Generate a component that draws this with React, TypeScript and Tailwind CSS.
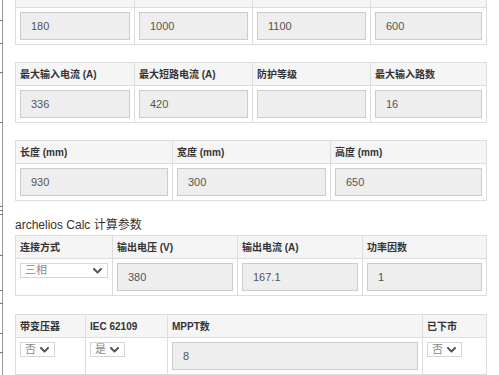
import React from "react";

const FONT = { fontFamily: '"Liberation Sans", Arial, "Noto Sans CJK SC", sans-serif' };

function Chevron() {
  return (
    <svg width="9" height="6" viewBox="0 0 9 6" className="shrink-0">
      <path d="M1 1 L4.5 4.5 L8 1" fill="none" stroke="#555" strokeWidth="2" strokeLinecap="round" strokeLinejoin="round" />
    </svg>
  );
}

function Head({ children, first, raise }: { children?: React.ReactNode; first?: boolean; raise?: boolean }) {
  return (
    <div
      className={`h-[23px] flex items-center px-1 bg-[#f5f5f5] border-b border-[#dddddd] text-[10px] font-bold text-[#333] whitespace-nowrap overflow-hidden ${first ? "" : "border-l"}`}
    >
      <span className={raise ? "relative -top-[3px]" : ""}>{children}</span>
    </div>
  );
}

function Cell({ children, first }: { children?: React.ReactNode; first?: boolean }) {
  return <div className={`p-1 bg-white border-[#dddddd] ${first ? "" : "border-l"}`}>{children}</div>;
}

function Input({ value }: { value: string }) {
  return (
    <div className="h-[28px] w-full bg-[#eeeeee] border border-[#cccccc] flex items-center pl-[10px] text-[11px] text-[#555]">
      {value}
    </div>
  );
}

function Select({ value, wide }: { value: string; wide?: boolean }) {
  return (
    <div
      className={`h-[15px] bg-white border border-[#d6d6d6] flex items-center justify-between pl-[4px] pr-[5px] text-[11px] text-[#8a8a8a] ${wide ? "w-full" : "w-[35px]"}`}
    >
      <span className="leading-none">{value}</span>
      <Chevron />
    </div>
  );
}

type Col = { h: string; v?: string; sel?: string; wideSel?: boolean };

function Table({ cols, grid, className, raise }: { cols: Col[]; grid: string; className?: string; raise?: boolean }) {
  return (
    <div className={`w-[472px] border border-[#dddddd] ${className ?? ""}`}>
      <div className={`grid ${grid}`}>
        {cols.map((c, i) => (
          <Head key={"h" + i} first={i === 0} raise={raise}>
            {c.h}
          </Head>
        ))}
        {cols.map((c, i) => (
          <Cell key={"c" + i} first={i === 0}>
            {c.sel !== undefined ? (
              <Select value={c.sel} wide={c.wideSel} />
            ) : (
              <Input value={c.v ?? ""} />
            )}
          </Cell>
        ))}
      </div>
    </div>
  );
}

export default function App() {
  const ticks = [20, 43, 72, 122, 206, 210, 214, 255, 290, 303, 333, 352];
  return (
    <div className="w-[499px] h-[375px] overflow-hidden bg-white flex" style={FONT}>
      <div className="relative w-[3px] h-[375px] border-r border-[#9a9a9a] shrink-0">
        {ticks.map((t) => (
          <div key={t} className="absolute left-0 w-[3px] h-px bg-[#777]" style={{ top: t }} />
        ))}
      </div>
      <div className="ml-[12px] flex flex-col">
        <Table
          className="mt-[-16px]"
          raise
          grid="grid-cols-[118px_118px_118px_1fr]"
          cols={[
            { h: "最小MPPT电压 (V)", v: "180" },
            { h: "最大MPPT电压 (V)", v: "1000" },
            { h: "最大输入电压 (V)", v: "1100" },
            { h: "额定电压 (V)", v: "600" },
          ]}
        />
        <Table
          className="mt-[17px]"
          grid="grid-cols-[118px_118px_118px_1fr]"
          cols={[
            { h: "最大输入电流 (A)", v: "336" },
            { h: "最大短路电流 (A)", v: "420" },
            { h: "防护等级", v: "" },
            { h: "最大输入路数", v: "16" },
          ]}
        />
        <Table
          className="mt-[17px]"
          grid="grid-cols-[156px_158px_1fr]"
          cols={[
            { h: "长度 (mm)", v: "930" },
            { h: "宽度 (mm)", v: "300" },
            { h: "高度 (mm)", v: "650" },
          ]}
        />
        <div className="mt-[16px] mb-[2px] h-[16px] leading-[16px] text-[12px] text-[#333]">archelios Calc 计算参数</div>
        <Table
          grid="grid-cols-[96px_125px_125px_1fr]"
          cols={[
            { h: "连接方式", sel: "三相", wideSel: true },
            { h: "输出电压 (V)", v: "380" },
            { h: "输出电流 (A)", v: "167.1" },
            { h: "功率因数", v: "1" },
          ]}
        />
        <Table
          className="mt-[18px]"
          grid="grid-cols-[69px_82px_255px_1fr]"
          cols={[
            { h: "带变压器", sel: "否" },
            { h: "IEC 62109", sel: "是" },
            { h: "MPPT数", v: "8" },
            { h: "已下市", sel: "否" },
          ]}
        />
      </div>
    </div>
  );
}
